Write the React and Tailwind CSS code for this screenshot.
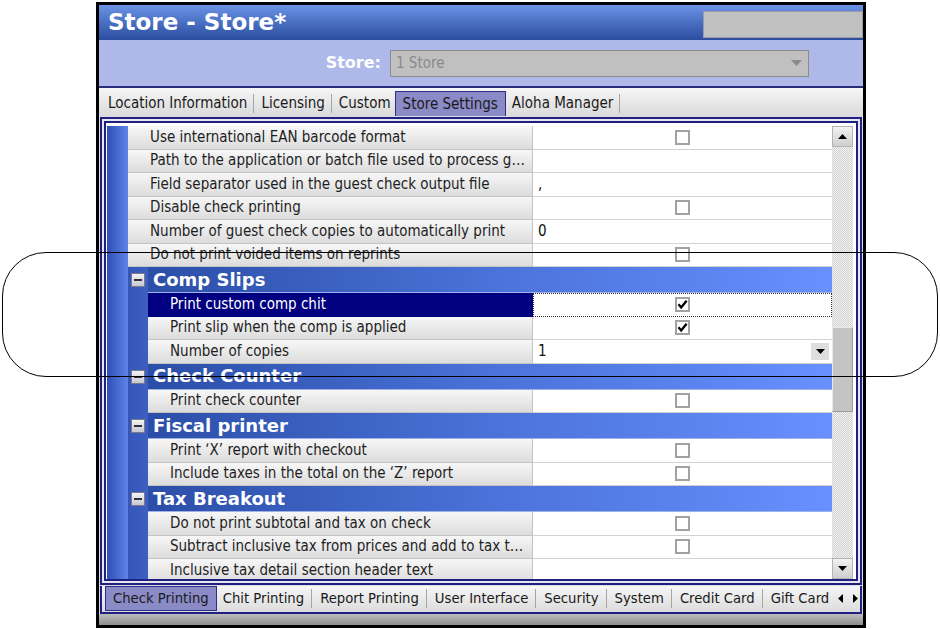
import React from "react";

const ui = "font-['DejaVu_Sans_Condensed','DejaVu_Sans',sans-serif]";
const bold = "font-['DejaVu_Sans',sans-serif] font-bold";

const rows = [
  { level: 1, label: "Use international EAN barcode format", kind: "check" },
  { level: 1, label: "Path to the application or batch file used to process g…" },
  { level: 1, label: "Field separator used in the guest check output file", kind: "text", text: "," },
  { level: 1, label: "Disable check printing", kind: "check" },
  { level: 1, label: "Number of guest check copies to automatically print", kind: "text", text: "0" },
  { level: 1, label: "Do not print voided items on reprints", kind: "check" },
  { header: "Comp Slips" },
  { level: 2, label: "Print custom comp chit", kind: "check", checked: true, selected: true },
  { level: 2, label: "Print slip when the comp is applied", kind: "check", checked: true },
  { level: 2, label: "Number of copies", kind: "text", text: "1", dropdown: true },
  { header: "Check Counter" },
  { level: 2, label: "Print check counter", kind: "check" },
  { header: "Fiscal printer" },
  { level: 2, label: "Print ‘X’ report with checkout", kind: "check" },
  { level: 2, label: "Include taxes in the total on the ‘Z’ report", kind: "check" },
  { header: "Tax Breakout" },
  { level: 2, label: "Do not print subtotal and tax on check", kind: "check" },
  { level: 2, label: "Subtract inclusive tax from prices and add to tax t…", kind: "check" },
  { level: 2, label: "Inclusive tax detail section header text" },
];

const topTabs = ["Location Information", "Licensing", "Custom", "Store Settings", "Aloha Manager"];
const bottomTabs = [
  "Check Printing",
  "Chit Printing",
  "Report Printing",
  "User Interface",
  "Security",
  "System",
  "Credit Card",
  "Gift Card",
];

function Checkbox({ checked }) {
  return (
    <span className="flex h-[15px] w-[15px] items-center justify-center border-2 border-[#a2a2a2] bg-white">
      {checked && (
        <svg viewBox="0 0 11 11" className="h-[11px] w-[11px]">
          <path d="M1.5 5.2 L4.2 8.4 L9.6 1.8" stroke="#000" strokeWidth="2.4" fill="none" />
        </svg>
      )}
    </span>
  );
}

function Gutter() {
  return <div className="w-[21px] shrink-0 bg-linear-to-r from-[#2d4fb6] to-[#5f84e6]" />;
}

function InnerGutter({ children }) {
  return (
    <div className="flex w-[20px] shrink-0 items-center justify-center bg-linear-to-r from-[#3556b8] to-[#3d5fc2]">
      {children}
    </div>
  );
}

function HeaderRow({ title }) {
  return (
    <div className="flex h-[26px] shrink-0">
      <Gutter />
      <InnerGutter>
        <span className="flex h-[14px] w-[14px] items-center justify-center border border-[#7a7a8a] bg-linear-to-b from-[#f4f4f4] to-[#c8c8d0]">
          <span className="h-[2px] w-[8px] bg-[#303040]" />
        </span>
      </InnerGutter>
      <div
        className={`flex flex-1 items-center border-b border-[#9fb2e8] bg-linear-to-r from-[#2b4ea8] via-[#4a72d8] to-[#6890ff] pl-[5px] text-[18px] leading-none text-white ${bold}`}
      >
        {title}
      </div>
    </div>
  );
}

function PropRow({ row }) {
  const labelW = row.level === 1 ? "w-[405px]" : "w-[385px]";
  return (
    <div className="flex h-[23.5px] shrink-0">
      <Gutter />
      {row.level === 2 && <InnerGutter />}
      <div
        className={`flex ${labelW} shrink-0 items-center overflow-hidden whitespace-nowrap border-r border-b pl-[22px] text-[15px] leading-none ${
          row.selected
            ? "border-[#000080] bg-[#000080] text-white"
            : "border-[#c4c4c4] bg-linear-to-b from-[#f7f7f7] to-[#dcdcdc] text-[#1e1e1e]"
        }`}
      >
        {row.label}
      </div>
      <div
        className={`relative flex min-w-0 flex-1 items-center bg-white ${
          row.selected ? "border border-dotted border-[#333]" : "border-b border-[#d2d2d2]"
        } ${row.kind === "check" ? "justify-center" : "pl-[5px]"}`}
      >
        {row.kind === "check" && <Checkbox checked={row.checked} />}
        {row.kind === "text" && (
          <span className="text-[15px] leading-none text-[#111]">{row.text}</span>
        )}
        {row.dropdown && (
          <span className="absolute right-[3px] top-[3px] flex h-[17px] w-[18px] items-center justify-center bg-[#dedede]">
            <svg viewBox="0 0 9 5" className="h-[5px] w-[9px]">
              <path d="M0 0 H9 L4.5 5 Z" fill="#000" />
            </svg>
          </span>
        )}
      </div>
    </div>
  );
}

function ScrollButton({ up }) {
  return (
    <div className="flex h-[21px] shrink-0 items-center justify-center border border-[#b4b4b4] bg-linear-to-b from-[#f2f2f2] to-[#cfcfcf]">
      <svg viewBox="0 0 9 5" className="h-[5px] w-[9px]">
        <path d={up ? "M0 5 H9 L4.5 0 Z" : "M0 0 H9 L4.5 5 Z"} fill="#000" />
      </svg>
    </div>
  );
}

const track =
  "bg-[image:repeating-conic-gradient(#d2d2d2_0%_25%,#f2f2f2_0%_50%)] bg-[length:2px_2px]";

function Scrollbar() {
  return (
    <div className="flex w-[21px] shrink-0 flex-col">
      <ScrollButton up />
      <div className={`h-[180px] shrink-0 ${track}`} />
      <div className="h-[85px] shrink-0 border border-[#e8e8e8] border-r-[#9a9a9a] border-b-[#9a9a9a] bg-[#c4c4c4]" />
      <div className={`flex-1 ${track}`} />
      <ScrollButton />
    </div>
  );
}

// Tab strip: the active tab is a raised lavender box; the others are split by thin rules,
// with no rule right before the active one.
function TabStrip({ tabs, active, boxed }) {
  return tabs.map((t, i) => {
    if (t === active) {
      return (
        <div
          key={t}
          className={`mr-[2px] flex h-[25px] shrink-0 items-center border-[#2e2e86] bg-[#8a8ac6] px-[7px] ${
            boxed ? "border" : "border-x border-t"
          }`}
        >
          {t}
        </div>
      );
    }
    const beforeActive = tabs[i + 1] === active;
    return (
      <div key={t} className="flex h-[25px] shrink-0 items-center">
        <span className="px-[4px]">{t}</span>
        {beforeActive ? null : (
          <span
            className={`h-[19px] w-[1px] bg-[#a6a6a6] ${boxed ? "ml-[3px] mr-[4px]" : "ml-[2px] mr-[3px]"}`}
          />
        )}
      </div>
    );
  });
}

export default function App() {
  return (
    <div className={`relative h-[629px] w-[940px] overflow-hidden bg-white ${ui}`}>
      <div className="ml-[96px] mt-[2px] flex h-[626px] w-[770px] flex-col border-[3px] border-black bg-[#d8d8e4]">
        {/* title bar */}
        <div className="flex h-[35px] shrink-0 bg-linear-to-b from-[#6b93e6] to-[#2b4d9f]">
          <div className={`flex flex-1 items-center pl-[9px] text-[23px] leading-none text-white ${bold}`}>
            Store - Store*
          </div>
          <div className="mt-[6px] mb-[2px] w-[160px] border border-[#9a9aa8] bg-[#c0c0c0]" />
        </div>

        {/* store selector */}
        <div className="flex h-[46px] shrink-0 items-center justify-end gap-[9px] bg-[#aeb9ea] pr-[54px]">
          <span className={`text-[16px] text-white ${bold}`}>Store:</span>
          <div className="flex h-[27px] w-[419px] items-center justify-between border border-[#8c8c8c] bg-[#c0c0c0] pl-[5px] pr-[6px]">
            <span className="text-[15px] text-[#8a8a8a]">1 Store</span>
            <svg viewBox="0 0 11 6" className="h-[6px] w-[11px]">
              <path d="M0 0 H11 L5.5 6 Z" fill="#8a8a8a" />
            </svg>
          </div>
        </div>
        <div className="h-[2px] shrink-0 bg-[#2b2b7c]" />

        {/* section tabs */}
        <div className="flex h-[28px] shrink-0 items-end bg-linear-to-b from-[#f6f6f6] to-[#dadada] pl-[5px] text-[15px] text-[#1a1a1a]">
          <TabStrip tabs={topTabs} active="Store Settings" />
        </div>

        {/* property grid */}
        <div className="flex min-h-0 flex-1 flex-col bg-[#dcdce6] p-[1px]">
          <div className="flex min-h-0 flex-1 flex-col border-2 border-[#1f1f82] bg-[#e6e6ee] p-[2px]">
            <div className="flex min-h-0 flex-1 border-2 border-[#1f1f82] bg-white pl-[1px] pr-[3px] pt-[3px]">
              <div className="flex min-w-0 flex-1 flex-col overflow-hidden">
                {rows.map((r, i) =>
                  r.header ? <HeaderRow key={i} title={r.header} /> : <PropRow key={i} row={r} />
                )}
              </div>
              <Scrollbar />
            </div>
          </div>
        </div>

        {/* page tabs */}
        <div className="mx-[1px] flex h-[28px] shrink-0 items-start border-x-2 border-b-2 border-[#1f1f82] bg-linear-to-b from-[#f6f6f6] to-[#dcdcdc] pl-[3px] text-[14.7px] text-[#1a1a1a]">
          <div className="flex min-w-0 flex-1 items-start overflow-hidden whitespace-nowrap">
            <TabStrip tabs={bottomTabs} active="Check Printing" boxed />
          </div>
          <div className="flex h-[25px] w-[24px] shrink-0 items-center justify-between px-[2px]">
            <svg viewBox="0 0 5 9" className="h-[9px] w-[5px]">
              <path d="M5 0 V9 L0 4.5 Z" fill="#000" />
            </svg>
            <svg viewBox="0 0 5 9" className="h-[9px] w-[5px]">
              <path d="M0 0 V9 L5 4.5 Z" fill="#000" />
            </svg>
          </div>
        </div>
        <div className="h-[11px] shrink-0 bg-linear-to-b from-[#bdbdbd] to-[#8e8e8e]" />
      </div>

      {/* callout outline around the Comp Slips block */}
      <div className="pointer-events-none absolute left-[2px] top-[252px] h-[125px] w-[936px] rounded-[44px] border border-black" />
    </div>
  );
}
